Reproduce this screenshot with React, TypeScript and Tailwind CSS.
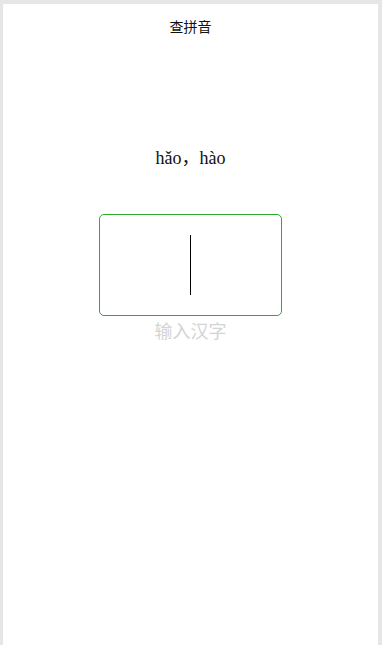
export default function App() {
    return (
        <div className="min-h-[645px] bg-[#e6e6e6] pl-[3px] pr-[4px] pt-[4px]">
            <div className="flex min-h-[641px] flex-col items-center bg-white">
                <header className="pt-[12px] text-[14px] leading-[20px] text-[#111] [font-family:'Noto_Sans_CJK_SC',sans-serif]">
                    查拼音
                </header>

                <p className="mt-[110px] text-[18px] leading-[24px] text-[#111] [font-family:'Liberation_Serif','Noto_Sans_CJK_SC',serif]">
                    hǎo，hào
                </p>

                <div className="mt-[44px] flex h-[102px] w-[183px] items-center justify-center rounded-[5px] border border-[#2eaa2e]">
                    <span className="h-[60px] w-px bg-black" />
                </div>

                <p className="mt-[2px] text-[18px] leading-[24px] text-[#d4d4d4] [font-family:'Noto_Sans_CJK_SC',sans-serif]">
                    输入汉字
                </p>
            </div>
        </div>
    );
}
